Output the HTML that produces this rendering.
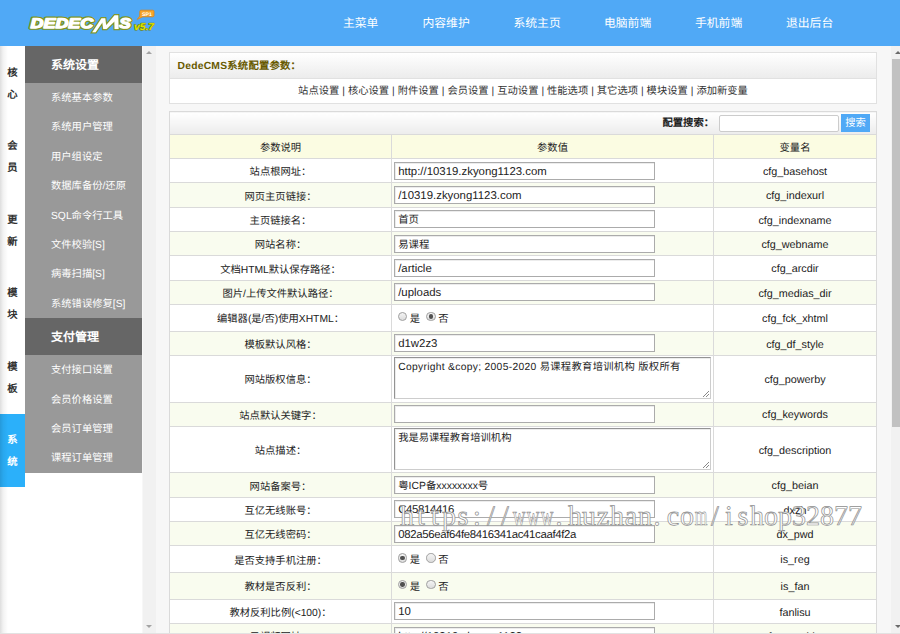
<!DOCTYPE html>
<html lang="zh-CN">
<head>
<meta charset="utf-8">
<title>DedeCMS</title>
<style>
*{box-sizing:border-box;margin:0;padding:0}
html,body{width:900px;height:634px;overflow:hidden;background:#f7f7f7}
body{font-family:"Liberation Sans",sans-serif;font-size:10.3px;color:#222;position:relative;text-rendering:geometricPrecision}
#top{position:absolute;left:0;top:0;width:900px;height:46px;background:#50a9f6}
#nav{position:absolute;left:0;top:0;width:900px;height:46px}
#nav a{position:absolute;top:16px;color:#fff;font-size:11.8px;line-height:15px;text-decoration:none;white-space:nowrap}
#tabs{position:absolute;left:0;top:46px;width:25px;height:588px;background:#fff}
#tabs div{height:73.5px;width:25px;text-align:center;font-weight:bold;color:#333;font-size:10.3px;line-height:22px;padding-top:16.5px}
#tabs div.on{background:#2bb0fa;color:#fff}
#lsh{position:absolute;left:0;top:46px;width:8px;height:588px;background:linear-gradient(90deg,rgba(0,0,0,.13),rgba(0,0,0,.05) 40%,rgba(0,0,0,0))}
#bline{position:absolute;left:0;top:632.7px;width:900px;height:1.3px;background:#e2e2e2;z-index:9}
#side{position:absolute;left:25px;top:46px;width:117px;height:588px;background:#fff}
#side h3{height:37px;line-height:39px;background:#666;color:#fff;font-size:12px;font-weight:bold;padding-left:26px}
#side p{height:29.4px;line-height:31.8px;background:#999;color:#fff;padding-left:26px;font-size:10.3px;white-space:nowrap}
#sb1{position:absolute;left:143px;top:46px;width:13px;height:588px;background:#f1f1f1}
#sb2{position:absolute;left:891px;top:46px;width:15px;height:588px;background:#f1f1f1}
#sb2 b{position:absolute;left:1.2px;top:13.2px;width:14px;height:367.5px;background:#c1c1c1}
.arr{position:absolute;left:3px;width:0;height:0;border-left:3.2px solid transparent;border-right:3.2px solid transparent}
.arr.up{border-bottom:3.5px solid #a3a3a3;margin-top:.4px}
.arr.dn{border-top:3.5px solid #a3a3a3}
.arr.up.dk{border-bottom-color:#6a6a6a}
.arr.dn.dk{border-top-color:#6a6a6a}
#main{position:absolute;left:169px;top:52px;width:708px}
.box{border:1px solid #e1e1e1;background:#fff}
.tbar{height:26px;line-height:27px;background:linear-gradient(#fff,#ececec);border-bottom:1px solid #e1e1e1;padding-left:7.5px;font-weight:bold;color:#685a00;letter-spacing:.25px}
.links{height:24px;line-height:25px;text-align:center;color:#333;word-spacing:.1px}
table{border-collapse:collapse;width:707px;table-layout:fixed;margin-top:7px;background:#fff}
td{border:1px solid #dadada;text-align:center;vertical-align:middle;height:24.3px;color:#222;padding:0}
tr.e td{background:#f9fcef}
tr.h td{background:#fbfce2}
td.v{text-align:left;padding-left:2.2px}
td.n{font-size:10.8px;padding-top:2.4px}
.in{display:block;width:261px;height:18px;border:1px solid #ababab;box-shadow:inset 1px 1px 0 #ececec;background:#fff;font-size:11.4px;line-height:18px;padding-left:3px;color:#222;white-space:nowrap;overflow:hidden}
.ta{display:block;width:317px;height:42px;margin-top:-1px;border:1px solid;border-color:#939393 #cdcdcd #cdcdcd #939393;box-shadow:inset 1px 1px 0 #ececec;letter-spacing:.3px;background:#fff;font-size:10.3px;line-height:13px;padding:2.8px 3px;color:#222;position:relative}
.in.c{font-size:10.4px;line-height:19.6px}
.in.k{letter-spacing:-.34px}
.ta.z{letter-spacing:0}
tr.s td{height:23.2px;background:linear-gradient(#fff,#ececec);text-align:right;padding:0}
tr.h td{height:24px}
tr.t td{height:46.5px}
tr.r td{height:26.8px}
.srch{position:relative;height:22.2px}
.srch .lb{position:absolute;right:162px;top:0;line-height:24.6px;color:#222;font-weight:bold}
.srch .sin{position:absolute;left:548.5px;top:2.5px;width:120px;height:17px;border:1px solid #ccc;border-radius:2px;background:#fff}
.srch .btn{position:absolute;left:671px;top:2px;width:29px;height:17.5px;background:#50a9f6;color:#fff;text-align:center;line-height:20px;font-size:10.3px}
.rd{display:inline-block;line-height:14px;padding-left:3.5px;padding-top:3px;font-size:10.3px}
.ro{display:inline-block;width:9.5px;height:9.5px;border:1px solid #a0a0a0;border-radius:50%;background:linear-gradient(#f4f4f4,#dcdcdc);vertical-align:.6px;margin-right:2.5px;position:relative}
.ro.r2{margin-left:6.2px}
.ro.on:after{content:"";position:absolute;left:1.6px;top:1.6px;width:4.3px;height:4.3px;border-radius:50%;background:#505050}
.grip{position:absolute;right:1px;bottom:1px;width:6px;height:6px;background:linear-gradient(135deg,transparent 0,transparent 48%,#888 48%,#888 58%,transparent 58%,transparent 72%,#888 72%,#888 82%,transparent 82%)}
</style>
</head>
<body>
<div id="top">
  <svg id="logo" width="150" height="40" viewBox="20 0 150 40" style="position:absolute;left:20px;top:0">
    <g font-family="Liberation Sans, sans-serif" font-weight="bold" font-style="italic" font-size="14" stroke-linejoin="round">
      <g fill="#7f9420" stroke="#7f9420" stroke-width="3.7">
        <text x="30.6" y="28.4" textLength="62.5" lengthAdjust="spacingAndGlyphs">DEDEC</text>
        <text x="119.2" y="28.4" textLength="11.5" lengthAdjust="spacingAndGlyphs">S</text>
        <path d="M92.3 32.2 L101.5 18.2 L105.2 18.2 L106.2 25.3 L114.6 15.2 L118.2 15.2 L118.6 29 L114.6 29 L114.4 21.5 L106.6 29 L103.2 29 L102.4 22.5 L95.6 32.2 Z" stroke-width="2.4" stroke-linejoin="miter"/>
      </g>
      <g fill="#fff" stroke="#fff" stroke-width="1.3">
        <text x="30.6" y="28.4" textLength="62.5" lengthAdjust="spacingAndGlyphs">DEDEC</text>
        <text x="119.2" y="28.4" textLength="11.5" lengthAdjust="spacingAndGlyphs">S</text>
        <path d="M92.3 32.2 L101.5 18.2 L105.2 18.2 L106.2 25.3 L114.6 15.2 L118.2 15.2 L118.6 29 L114.6 29 L114.4 21.5 L106.6 29 L103.2 29 L102.4 22.5 L95.6 32.2 Z" stroke-width=".2"/>
      </g>
      <text x="134" y="30.4" font-size="9.8" textLength="20" lengthAdjust="spacingAndGlyphs" fill="#e2e600" stroke="#75850f" stroke-width="1.2" paint-order="stroke">v5.7</text>
    </g>
    <path d="M141 10.2 h11.8 a1.2 1.2 0 0 1 1.2 1.2 v4.2 a1.2 1.2 0 0 1 -1.2 1.2 h-10 l-5.6 2.6 l2.6 -3.4 v-4.6 a1.2 1.2 0 0 1 1.2 -1.2 z" fill="#f7a62b" stroke="#dd8416" stroke-width=".8"/>
    <text x="147" y="15.6" font-family="Liberation Sans, sans-serif" font-weight="bold" font-size="5.2" text-anchor="middle" fill="#fff">SP1</text>
  </svg>
  <div id="nav">
    <a style="left:343px">主菜单</a>
    <a style="left:422.5px">内容维护</a>
    <a style="left:513.5px">系统主页</a>
    <a style="left:604px">电脑前端</a>
    <a style="left:695px">手机前端</a>
    <a style="left:786px">退出后台</a>
  </div>
</div>
<div id="tabs">
  <div>核<br>心</div>
  <div>会<br>员</div>
  <div>更<br>新</div>
  <div>模<br>块</div>
  <div>模<br>板</div>
  <div class="on">系<br>统</div>
</div>
<div id="side">
  <h3>系统设置</h3>
  <p>系统基本参数</p>
  <p>系统用户管理</p>
  <p>用户组设定</p>
  <p>数据库备份/还原</p>
  <p>SQL命令行工具</p>
  <p>文件校验[S]</p>
  <p>病毒扫描[S]</p>
  <p>系统错误修复[S]</p>
  <h3>支付管理</h3>
  <p>支付接口设置</p>
  <p>会员价格设置</p>
  <p>会员订单管理</p>
  <p>课程订单管理</p>
</div>
<div id="sb1"><i class="arr up" style="top:5px;left:3.3px"></i><i class="arr dn" style="top:579px;left:3.3px"></i></div>
<div id="sb2"><i class="arr up dk" style="top:5px;left:4.3px"></i><b></b><i class="arr dn dk" style="top:579px;left:4.3px"></i></div>
<div id="lsh"></div><div id="bline"></div>
<div id="main">
  <div class="box">
    <div class="tbar">DedeCMS系统配置参数：</div>
    <div class="links">站点设置 | 核心设置 | 附件设置 | 会员设置 | 互动设置 | 性能选项 | 其它选项 | 模块设置 | 添加新变量</div>
  </div>
  <table>
    <colgroup><col style="width:222px"><col style="width:322px"><col style="width:163px"></colgroup>
    <tr class="s"><td colspan="3"><div class="srch"><span class="lb">配置搜索：</span><span class="sin"></span><span class="btn">搜索</span></div></td></tr>
    <tr class="h"><td>参数说明</td><td>参数值</td><td>变量名</td></tr>
    <tr class=""><td>站点根网址：</td><td class="v"><span class="in">http://10319.zkyong1123.com</span></td><td class="n">cfg_basehost</td></tr>
    <tr class="e"><td>网页主页链接：</td><td class="v"><span class="in">/10319.zkyong1123.com</span></td><td class="n">cfg_indexurl</td></tr>
    <tr class=""><td>主页链接名：</td><td class="v"><span class="in c">首页</span></td><td class="n">cfg_indexname</td></tr>
    <tr class="e"><td>网站名称：</td><td class="v"><span class="in c">易课程</span></td><td class="n">cfg_webname</td></tr>
    <tr class=""><td>文档HTML默认保存路径：</td><td class="v"><span class="in">/article</span></td><td class="n">cfg_arcdir</td></tr>
    <tr class="e"><td>图片/上传文件默认路径：</td><td class="v"><span class="in">/uploads</span></td><td class="n">cfg_medias_dir</td></tr>
    <tr class="r"><td>编辑器(是/否)使用XHTML：</td><td class="v"><span class="rd"><i class="ro"></i>是<i class="ro on r2"></i>否</span></td><td class="n">cfg_fck_xhtml</td></tr>
    <tr class="e"><td>模板默认风格：</td><td class="v"><span class="in">d1w2z3</span></td><td class="n">cfg_df_style</td></tr>
    <tr class="t"><td>网站版权信息：</td><td class="v"><span class="ta">Copyright &amp;copy; 2005-2020 易课程教育培训机构 版权所有<i class="grip"></i></span></td><td class="n">cfg_powerby</td></tr>
    <tr class="e"><td>站点默认关键字：</td><td class="v"><span class="in"></span></td><td class="n">cfg_keywords</td></tr>
    <tr class="t"><td>站点描述：</td><td class="v"><span class="ta z">我是易课程教育培训机构<i class="grip"></i></span></td><td class="n">cfg_description</td></tr>
    <tr class="e"><td>网站备案号：</td><td class="v"><span class="in c">粤ICP备xxxxxxxx号</span></td><td class="n">cfg_beian</td></tr>
    <tr class=""><td>互亿无线账号：</td><td class="v"><span class="in k">C45814416</span></td><td class="n">dxzh</td></tr>
    <tr class="e"><td>互亿无线密码：</td><td class="v"><span class="in k">082a56eaf64fe8416341ac41caaf4f2a</span></td><td class="n">dx_pwd</td></tr>
    <tr class="r"><td>是否支持手机注册：</td><td class="v"><span class="rd"><i class="ro on"></i>是<i class="ro r2"></i>否</span></td><td class="n">is_reg</td></tr>
    <tr class="e r"><td>教材是否反利：</td><td class="v"><span class="rd"><i class="ro on"></i>是<i class="ro r2"></i>否</span></td><td class="n">is_fan</td></tr>
    <tr class=""><td>教材反利比例(&lt;100)：</td><td class="v"><span class="in">10</span></td><td class="n">fanlisu</td></tr>
    <tr class="e"><td>云视频网址：</td><td class="v"><span class="in">http://10319.zkyong1123.com</span></td><td class="n">cfg_yunvideo</td></tr>
  </table>
</div>
<svg id="wm" width="480" height="40" viewBox="395 498 480 40" style="position:absolute;left:395px;top:498px">
  <g font-family="Liberation Serif, serif" font-size="28" fill="#fff" stroke="#8e8e8e" stroke-width=".7">
    <text x="400.0 417.1 431.1 442.0 457.6 473.1 487.1 501.1" y="525">https://</text>
    <text x="555.5 568.0 582.0 596.8 610.0 624.8 638.0 653.5 666.8 680.0" y="525">.huzhan.co</text>
    <text x="711.1 725.1 737.6 750.0 764.0 778.0 792.0 806.0 820.0 834.0 848.0" y="525">/ishop32877</text>
    <text transform="translate(519.0 525) scale(0.623 1)" text-anchor="middle">w</text>
    <text transform="translate(533.0 525) scale(0.623 1)" text-anchor="middle">w</text>
    <text transform="translate(547.0 525) scale(0.623 1)" text-anchor="middle">w</text>
    <text transform="translate(701.0 525) scale(0.579 1)" text-anchor="middle">m</text>
  </g>
</svg>
</body>
</html>
